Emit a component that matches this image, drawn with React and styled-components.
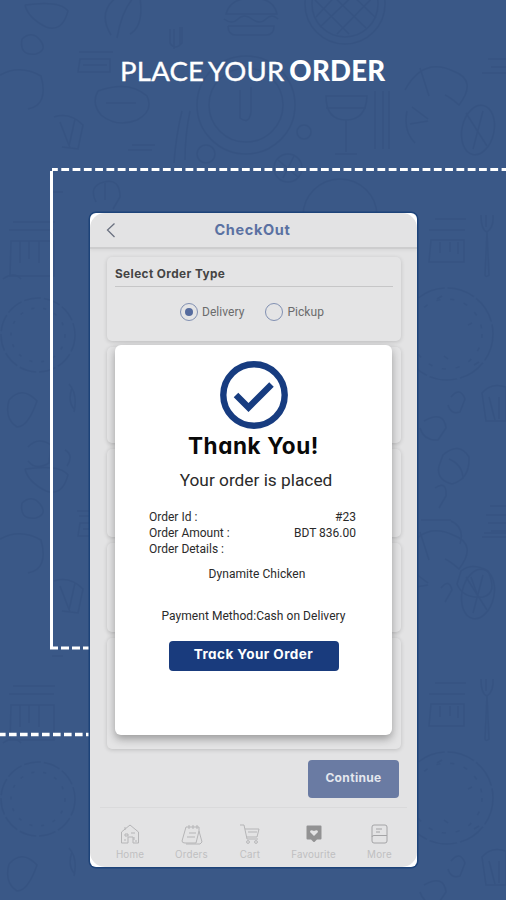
import React from "react";
import styled, { createGlobalStyle } from "styled-components";

const GlobalStyle = createGlobalStyle`
  * { box-sizing: border-box; }
  html, body { margin: 0; padding: 0; }
  body { background: #3a5887; }
`;

const display = `"Inter", "Open Sans", sans-serif`;
const body = `"Roboto", "Noto Sans", sans-serif`;

const Page = styled.main`
  position: relative;
  width: 506px;
  height: 900px;
  overflow: hidden;
  background: #3a5887;
  display: flex;
  flex-direction: column;
  font-family: ${body};
`;

const Doodles = styled.svg`
  position: absolute;
  inset: 0;
  fill: none;
  stroke: #2c4876;
  stroke-width: 1.5;
  opacity: 0.26;
`;

const Headline = styled.h1`
  position: relative;
  height: 213px;
  margin: 0;
  padding: 54px 0 0 120px;
  font: 400 27.5px/34px "Lato", sans-serif;
  letter-spacing: 0.25px;
  word-spacing: -2.5px;
  -webkit-text-stroke: 0.35px #fff;
  color: #fff;
  white-space: nowrap;
  strong { font-weight: 900; letter-spacing: 0.25px; -webkit-text-stroke: 0; }
`;

const Dashes = styled.svg`
  position: absolute;
  inset: 0;
  fill: none;
  stroke: #fff;
`;

const Phone = styled.section`
  position: relative;
  width: 327px;
  height: 654px;
  margin-left: 90px;
  border-radius: 6px;
  background: #fff;
  box-shadow: 0 0 0 1.5px #1d4379;
  overflow: hidden;
`;

const Screen = styled.div`
  height: 100%;
  border-radius: 15px;
  overflow: hidden;
  background: #e3e3e4;
  display: flex;
  flex-direction: column;
`;

const AppBar = styled.header`
  flex: none;
  height: 36px;
  display: grid;
  grid-template-columns: 42px 1fr 44px;
  align-items: center;
  border-bottom: 2px solid #cdcdce;
  box-shadow: 0 1px 3px #d4d4d5;
  svg { margin-left: 15px; display: block; }
`;

const ScreenTitle = styled.h2`
  margin: 0;
  text-align: center;
  font: 700 14.5px/20px ${display};
  font-feature-settings: "cv11";
  letter-spacing: 0.65px;
  color: #5a71a2;
`;

const Cards = styled.div`
  flex: none;
  height: 501px;
  margin: 8px 16px 0 17px;
  display: flex;
  flex-direction: column;
  gap: 6px;
`;

const Card = styled.section`
  flex: none;
  height: ${(p) => p.$h}px;
  padding: 8px 8px;
  border-radius: 5px;
  background: #e4e4e5;
  box-shadow: 0 1px 4px rgba(0, 0, 0, 0.16);
`;

const CardTitle = styled.h3`
  margin: 0 0 16px;
  height: 22px;
  border-bottom: 1px solid #c6c6c7;
  font: 700 11.8px/18px ${display};
  letter-spacing: 0.4px;
  color: #444;
`;

const Options = styled.div`
  display: flex;
  gap: 21px;
  padding-left: 65px;
`;

const Option = styled.label`
  display: flex;
  align-items: center;
  gap: 4px;
  height: 18px;
  font-size: 12px;
  letter-spacing: 0.05px;
  color: #6b6b6c;
`;

const Radio = styled.span`
  width: 18px;
  height: 18px;
  border: 1px solid #8190b2;
  border-radius: 50%;
  display: grid;
  place-items: center;
  &::after {
    content: "";
    width: 8px;
    height: 8px;
    border-radius: 50%;
    background: ${(p) => (p.$on ? "#556b9e" : "transparent")};
  }
`;

const Actions = styled.div`
  display: flex;
  justify-content: flex-end;
  padding: 2px 18px 0 0;
  height: 49px;
`;

const Button = styled.button`
  border: 0;
  padding: 0 0 3px;
  border-radius: 4px;
  width: ${(p) => p.$w}px;
  height: ${(p) => p.$h}px;
  background: ${(p) => (p.$muted ? "#6a7ba3" : "#193b7d")};
  color: ${(p) => (p.$muted ? "#e4e7ee" : "#fff")};
  font: 700 ${(p) => p.$size}px/18px ${display};
  font-feature-settings: "cv11";
  letter-spacing: ${(p) => p.$track || 0}px;
`;

const TabBar = styled.nav`
  display: flex;
  height: 58px;
  margin: 0 10px;
  border-top: 1px solid #dadadb;
  padding-top: 15px;
`;

const Tab = styled.div`
  flex: none;
  width: ${(p) => p.$w}px;
  display: flex;
  flex-direction: column;
  align-items: center;
  gap: 3px;
  font: 400 9.8px/13px ${display};
  color: #bfbfc1;
  letter-spacing: 0.2px;
  svg { display: block; width: 22px; height: 22px; fill: none; stroke: #b5b5b7; stroke-width: 1; }
`;

const Dialog = styled.section`
  position: absolute;
  left: 25px;
  top: 132px;
  width: 277px;
  height: 390px;
  border-radius: 6px;
  background: #fff;
  box-shadow: 0 4px 8px rgba(0, 0, 0, 0.32);
  display: flex;
  flex-direction: column;
  align-items: center;
  padding-top: 16px;
  color: #2a2a2a;
`;

const Thanks = styled.h2`
  margin: 1px 0 0;
  font: 700 22.5px/32px ${display};
  font-feature-settings: "cv11";
  letter-spacing: 0.6px;
  color: #090909;
`;

const Placed = styled.p`
  margin: 6px 0 17px 5px;
  font-size: 17.3px;
  line-height: 24px;
`;

const Details = styled.dl`
  width: 207px;
  margin: 0 0 0 -2px;
  font-size: 12px;
  line-height: 16.2px;
`;

const Detail = styled.div`
  display: flex;
  justify-content: space-between;
  dt, dd { margin: 0; }
`;

const Line = styled.p`
  margin: ${(p) => p.$top}px 0 0 ${(p) => p.$left}px;
  font-size: 12px;
  line-height: 16px;
  letter-spacing: 0.05px;
`;

const TrackWrap = styled.div`
  margin-top: 17px;
`;

function Motifs() {
  return (
    <>
      <path d="M226 14q4-16 26-16t25 16zM224 19q8 6 14 0t14 0 14 0 12 0M228 26h46q0 9-8 9h-30q-8 0-8-9M25 5q35-5 43 6-6 22-22 16Q28 18 25 5M22 39q10-9 18 1t-4 14q-17 2-14-15" />
      <circle cx="345" cy="4" r="40" />
      <circle cx="345" cy="4" r="33" />
      <path d="M315 0l34 34M327-10l39 38M347-10l29 28M375-5l-38 39M359-10l-39 37M341-10l-25 27" />
      <path d="M111 35Q96 10 120-5M117 38q5-29 18-42M130 34q14-8 10-36M79 52h34M80 59h30v13H78zM83 65h24M174 29v20M180 27v18M170 29v14q5 8 12 0V27" />
      <circle cx="246" cy="105" r="49" />
      <circle cx="246" cy="105" r="37" />
      <path d="M240 90v28q9 7 11-6V87M326 96q0 24 20 24t21-24zM346 120v32M335 154h22M326 108h40M383 91v58M389 91v58M375 91v58M405 90q18-33 48-19 25 9 6 34-9-8-14-10M420 68l9 28M407 111q-4 20 8 32M412 107l16 12M410 124l18-3" />
      <ellipse cx="478" cy="130" rx="16" ry="25" transform="rotate(12 478 130)" />
      <path d="M466 113l21 33M483 111l-10 38M488 59h32M491 67h28M482 73h30" />
      <path d="M98 91q31-11 49 5 7 15-10 24-20 8-36-5-10-12-3-24M0 75q20-11 41 1 8 29-13 33M106 103h30M54 117q16-5 29 8l-5 24-16-2M60 122l10 26M75 119l-6 27M182 111q-6 24-8 52M190 111q-5 24-5 49M132 145h23M128 150h24" />
      <circle cx="304" cy="132" r="7" /><circle cx="206" cy="154" r="9" /><circle cx="288" cy="168" r="14" />
      <path d="M278 160l20 17M294 156l-11 22M52 192h11M96 202q-8-16 8-20t16 15l-7 12M105 183v17" />
      <circle cx="340" cy="216" r="37" />
      <path d="M13 222h42M9 230h45M11 241h43v35H10zM20 241v22M29 241v18M39 241v22" />
      <circle cx="38" cy="335" r="37" strokeDasharray="17 3" />
      <circle cx="38" cy="335" r="27" strokeDasharray="3 9" />
      <path d="M3 279q11-8 18 0M9 400q13-15 28 1-9 26-20 26-13-8-8-27M69 384q9 10 5 28M77 511h13M72 388q-5 14 3 22M28 447q10-11 23-2l-2 18q-13 8-21-2M65 450q9 5 2 16" />
      <path d="M435 219h31M429 230h36M431 240h33v22h-35zM440 242v11M450 242v10M458 242v12M481 215q0 15 6 17l-2 43q1 3 4 0l-2-43q7-5 6-17M486 215v12" />
      <circle cx="447" cy="334" r="46" strokeDasharray="28 3" />
      <circle cx="447" cy="334" r="35" strokeDasharray="4 10" />
      <path d="M437 299l5-3M468 325l4-2M444 356l4 3M474 365l5-3M451 397q9-11 14 2l-5 13q-9 3-12-7M482 393q9-11 24-6v34h-20zM489 397l6 23M499 397v22" />
      <path d="M424 421q20-11 22 7l-8 12q-14 1-18-12M443 455q16-14 26 2 1 22-17 27-16-4-13-18zM449 459q14 6 14 20M435 488q12-8 11 8l-7 12M490 506h24M486 515h28M484 533h28M421 520h30M451 521q14 6 9 23" />
      <path d="M461 571q11-9 27 0 10 22-5 26-20 2-26-13zM471 577l6 17M441 588q8-10 11 2l-7 12" />
    </>
  );
}

function Pattern() {
  return (
    <Doodles width="506" height="900" viewBox="0 0 506 900" aria-hidden="true">
      <Motifs />
      <g transform="translate(0 464)"><Motifs /></g>
    </Doodles>
  );
}

const tabs = [
  { label: "Home", w: 60, icon: <path d="M2.5 20V9L11 2l8.5 7v11H14v-6H9v6zM6 4v3M6 11h3v2H6zM12 10h4M15 14v3M5 17h2M16 18h2" /> },
  { label: "Orders", w: 63, icon: <path d="M5 4h13v4l3 11-2 2H5M5 4L1 18q0 2 3 2h11l3-12M8 2v4M12 2v4M16 2v4M8 10h7M6 14h8" /> },
  { label: "Cart", w: 54, icon: <><path d="M1 2h4l3 14h11M6 6h14l-2 8H8M9 9h9" /><circle cx="9" cy="19" r="1.4" /><circle cx="17" cy="19" r="1.4" /></> },
  { label: "Favourite", w: 73, icon: <><path d="M4.5 3.5h13v12h-4L11 18l-2.5-2.5h-4z" fill="#929293" stroke="#929293" strokeWidth="2" strokeLinejoin="round" /><path d="M11 13l-4-4q0-3 4-1 4-2 4 1z" fill="#e3e3e4" stroke="none" /></> },
  { label: "More", w: 59, icon: <path d="M5 2h11q2 0 2 2v14q0 2-2 2H5q-2 0-2-2V4q0-2 2-2zM3 14q0-1.500 2-1.500h13M7 6h6M7 9h4" stroke="#a4a4a6" /> },
];

export default function App() {
  return (
    <>
      <GlobalStyle />
      <Page>
        <Pattern />
        <Dashes width="506" height="900" viewBox="0 0 506 900" aria-hidden="true">
          <path d="M51.5 648.5V171" strokeWidth="3" />
          <path d="M52 169.5H506" strokeWidth="3" strokeDasharray="7.8 3.49" strokeDashoffset="2" />
          <path d="M50 648H90" strokeWidth="3" strokeDasharray="8 3" />
          <path d="M0 734.5H90" strokeWidth="3.5" strokeDasharray="7.6 3.4" strokeDashoffset="2" />
        </Dashes>
        <Headline>PLACE YOUR <strong>ORDER</strong></Headline>
        <Phone>
          <Screen>
            <AppBar>
              <svg width="12" height="16" viewBox="0 0 12 16" fill="none" stroke="#6b7180" strokeWidth="1.3"><path d="M9.5 1.5L2.5 8l7 7" /></svg>
              <ScreenTitle>CheckOut</ScreenTitle>
            </AppBar>
            <Cards>
              <Card $h={84}>
                <CardTitle>Select Order Type</CardTitle>
                <Options>
                  <Option><Radio $on />Delivery</Option>
                  <Option><Radio />Pickup</Option>
                </Options>
              </Card>
              <Card $h={96} />
              <Card $h={88} />
              <Card $h={89} />
              <Card $h={111} />
            </Cards>
            <Actions>
              <Button $muted $w={91} $h={38} $size={12} $track={0.35}>Continue</Button>
            </Actions>
            <TabBar>
              {tabs.map((t) => (
                <Tab key={t.label} $w={t.w}>
                  <svg viewBox="0 0 22 22">{t.icon}</svg>
                  {t.label}
                </Tab>
              ))}
            </TabBar>
          </Screen>
          <Dialog role="dialog">
            <svg width="68" height="68" viewBox="0 0 68 68" fill="none" stroke="#173c80">
              <circle cx="34" cy="34" r="30.7" strokeWidth="6.4" />
              <path d="M16 34L28.500 46.500L51.500 23.500" strokeWidth="6.4" />
            </svg>
            <Thanks>Thank You!</Thanks>
            <Placed>Your order is placed</Placed>
            <Details>
              <Detail><dt>Order Id :</dt><dd>#23</dd></Detail>
              <Detail><dt>Order Amount :</dt><dd>BDT 836.00</dd></Detail>
              <Detail><dt>Order Details :</dt></Detail>
            </Details>
            <Line $top={8} $left={7}>Dynamite Chicken</Line>
            <Line $top={26} $left={0}>Payment Method:Cash on Delivery</Line>
            <TrackWrap><Button $w={170} $h={30} $size={13.5} $track={0.45}>Track Your Order</Button></TrackWrap>
          </Dialog>
        </Phone>
      </Page>
    </>
  );
}
